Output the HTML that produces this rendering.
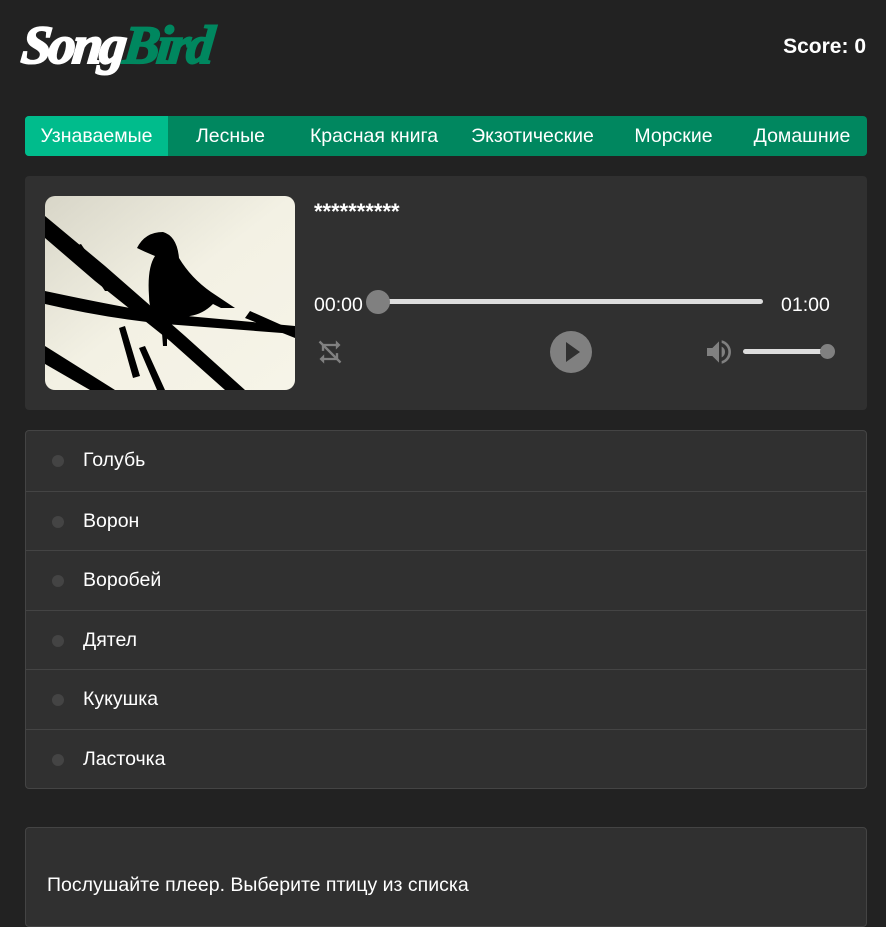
<!DOCTYPE html>
<html><head><meta charset="utf-8"><style>
*{box-sizing:border-box;margin:0;padding:0}
body{width:886px;height:908px;background:#222;font-family:"Liberation Sans","DejaVu Sans",sans-serif;color:#fff;overflow:hidden;position:relative}
.logo{position:absolute;left:22px;top:14px;font:italic 900 54px "Liberation Serif",serif;letter-spacing:-3px;transform:skew(-6deg);-webkit-text-stroke:2px currentColor}
.logo span{color:#00875f}
.score{position:absolute;right:20px;top:35px;font-weight:bold;font-size:21px}
.nav{position:absolute;left:25px;top:116px;width:842px;height:40px;background:#00875f;border-radius:4px;display:flex;overflow:hidden;font-size:19.5px}
.nav div{height:40px;line-height:40px;text-align:center;white-space:nowrap}
.nav .a{background:#00bc8c}
.panel{position:absolute;left:25px;width:842px;background:#303030;border-radius:4px}
.t{position:absolute;font-size:19.5px}
ul{list-style:none;position:absolute;left:25px;top:430px;width:842px;border:1px solid #444;border-radius:4px;background:#303030}
li{height:59.5px;border-top:1px solid #444;position:relative;font-size:19.5px;line-height:59px;padding-left:57px}
li:first-child{border-top:none}
li:before{content:"";position:absolute;left:26px;top:24px;width:12px;height:12px;border-radius:50%;background:#444}
</style></head><body>
<div class="logo">Song<span>Bird</span></div>
<div class="score">Score: 0</div>
<div class="nav">
<div class="a" style="width:143px">Узнаваемые</div>
<div style="width:125px">Лесные</div>
<div style="width:162px">Красная книга</div>
<div style="width:155px">Экзотические</div>
<div style="width:127px">Морские</div>
<div style="width:130px">Домашние</div>
</div>
<div class="panel" style="top:176px;height:234px">
<svg style="position:absolute;left:20px;top:20px" width="250" height="194" viewBox="0 0 250 194">
<defs><clipPath id="c"><rect width="250" height="194" rx="10"/></clipPath>
<linearGradient id="g" x1="0" y1="0" x2="1" y2="1"><stop offset="0" stop-color="#d8d6c8"/><stop offset="0.5" stop-color="#f3f1e4"/><stop offset="1" stop-color="#f6f4e8"/></linearGradient></defs>
<g clip-path="url(#c)">
<rect width="250" height="194" fill="url(#g)"/>
<path d="M0 20 L60 70 L140 140 L200 194 L180 194 L125 145 L50 85 L0 42Z" fill="#000"/>
<path d="M0 95 Q70 110 120 118 L250 130 L250 138 L120 128 Q60 122 0 108Z" fill="#000"/>
<path d="M60 95 L30 50 L36 48 L68 95Z M80 130 L95 180 L88 182 L74 132Z M100 150 L120 194 L112 194 L94 152Z M205 115 L250 135 L250 142 L200 122Z" fill="#000"/>
<path d="M0 150 L70 194 L45 194 L0 168Z" fill="#000"/>
<path d="M92 52 Q100 36 118 36 Q132 40 134 62 Q146 82 166 96 L190 112 L176 112 L168 108 Q158 118 145 120 Q135 126 122 124 L122 150 L118 150 L116 124 Q104 118 104 100 Q102 72 110 60 Q100 56 92 52Z" fill="#000"/>
</g></svg>
<div class="t" style="left:289px;top:23px;font-size:22px;font-weight:bold">**********</div>
<div class="t" style="left:289px;top:118px">00:00</div>
<div class="t" style="left:756px;top:118px">01:00</div>
<div style="position:absolute;left:352px;top:123px;width:386px;height:5px;background:#ddd;border-radius:3px"></div>
<div style="position:absolute;left:341px;top:114px;width:24px;height:24px;background:#808080;border-radius:50%"></div>
<svg style="position:absolute;left:291px;top:162px" width="28" height="28" viewBox="0 0 24 24" fill="#808080"><path d="M7 7h10v3l4-4-4-4v3H5v6h2zM17 17H7v-3l-4 4 4 4v-3h12v-6h-2z"/><path d="M3 3L21 21" stroke="#808080" stroke-width="2"/></svg>
<div style="position:absolute;left:525px;top:155px;width:42px;height:42px;background:#808080;border-radius:50%"></div>
<div style="position:absolute;left:541px;top:166px;width:0;height:0;border-left:14px solid #303030;border-top:10px solid transparent;border-bottom:10px solid transparent"></div>
<svg style="position:absolute;left:678px;top:160px" width="32" height="32" viewBox="0 0 24 24" fill="#808080"><path d="M3 9v6h4l5 5V4L7 9z"/><path d="M16.5 12A4.5 4.5 0 0 0 14 7.97v8.05A4.5 4.5 0 0 0 16.5 12z"/><path d="M14 3.23v2.06a7 7 0 0 1 0 13.42v2.06A9 9 0 0 0 14 3.23z"/></svg>
<div style="position:absolute;left:718px;top:173px;width:86px;height:5px;background:#ddd;border-radius:3px"></div>
<div style="position:absolute;left:795px;top:168px;width:15px;height:15px;background:#808080;border-radius:50%"></div>
</div>
<ul><li>Голубь</li><li>Ворон</li><li>Воробей</li><li>Дятел</li><li>Кукушка</li><li>Ласточка</li></ul>
<div class="panel" style="top:827px;height:100px;border:1px solid #444">
<div class="t" style="left:21px;top:46px">Послушайте плеер. Выберите птицу из списка</div>
</div>
</body></html>
